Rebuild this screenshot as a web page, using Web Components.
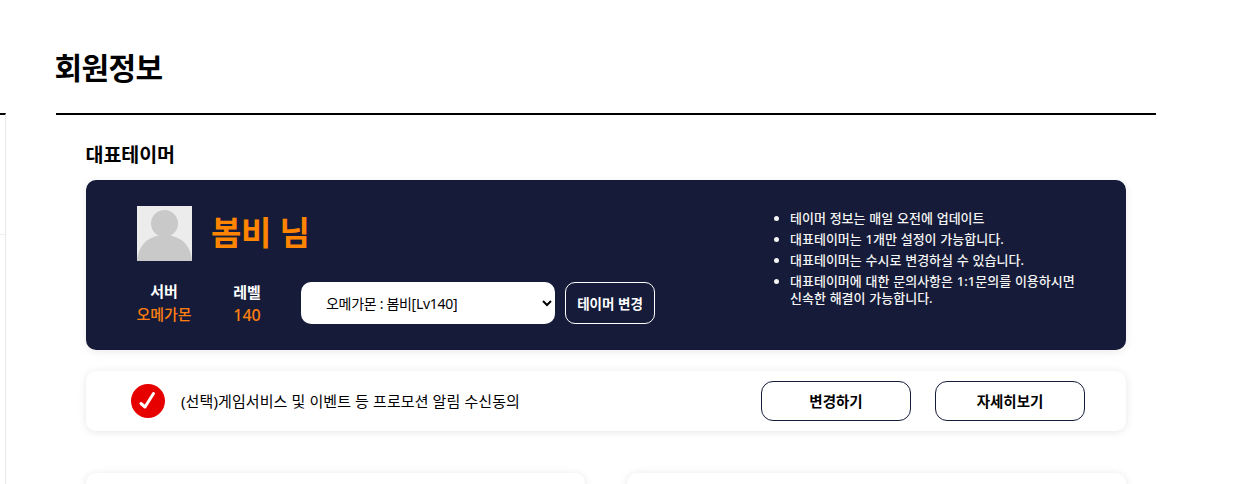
<!DOCTYPE html>
<html lang="ko">
<head>
<meta charset="utf-8">
<title>회원정보</title>
<style>
  html, body { margin: 0; padding: 0; background: #fff; overflow: hidden; }
  body { font-family: "Noto Sans", "Noto Sans CJK KR", sans-serif; color: #000; }
</style>
</head>
<body>
<member-page>
  <tier-card></tier-card>
  <consent-bar></consent-bar>
  <div slot="cards" style="display:contents">
    <blank-card></blank-card>
    <blank-card></blank-card>
  </div>
</member-page>

<script>
const FONT = `"Noto Sans", "Noto Sans CJK KR", sans-serif`;

class MemberPage extends HTMLElement {
  constructor() {
    super();
    this.attachShadow({ mode: "open" }).innerHTML = `
      <style>
        :host { display: flex; width: 1253px; height: 484px; overflow: hidden; font-family: ${FONT}; }
        .side { flex: 0 0 56px; display: flex; flex-direction: column; padding-top: 113px; box-sizing: border-box; }
        .side-box { width: 6px; height: 122px; box-sizing: border-box; border-top: 2px solid #000; border-right: 1px solid #e8e8e8; border-bottom: 1px solid #eee; }
        .side-rest { width: 6px; flex: 1; box-sizing: border-box; border-right: 1px solid #e8e8e8; }
        main { flex: 0 0 1100px; }
        h1 { margin: 0 0 0 -1.5px; height: 113px; box-sizing: border-box; padding-top: 46px; font-size: 30px; line-height: 44px; font-weight: 700; letter-spacing: -0.6px; }
        .body { border-top: 2px solid #000; padding: 27px 30px 0; }
        h2 { margin: 0 0 12px -0.4px; font-size: 19.5px; line-height: 26px; font-weight: 700; letter-spacing: -0.1px; }
        .stack { display: flex; flex-direction: column; gap: 21px; }
        .cards { display: flex; gap: 42px; margin-top: 42px; }
      </style>
      <div class="side"><div class="side-box"></div><div class="side-rest"></div></div>
      <main>
        <h1>회원정보</h1>
        <div class="body">
          <h2>대표테이머</h2>
          <div class="stack"><slot></slot></div>
          <div class="cards"><slot name="cards"></slot></div>
        </div>
      </main>`;
  }
}

class TierCard extends HTMLElement {
  constructor() {
    super();
    this.attachShadow({ mode: "open" }).innerHTML = `
      <style>
        :host { display: flex; justify-content: space-between; height: 170px; box-sizing: border-box; background: #151b38; border-radius: 10px; color: #fff; box-shadow: 0 2px 8px rgba(0,0,0,.08); padding: 26px 0 0 51px; }
        .who { display: flex; align-items: center; gap: 19px; }
        .avatar { width: 55px; height: 55px; display: block; }
        .name { font-size: 33px; line-height: 50px; font-weight: 700; color: #ff8400; margin-top: -1px; letter-spacing: -0.3px; }
        .row { display: flex; align-items: center; margin-top: 19px; margin-left: -14px; }
        .stat { width: 82px; text-align: center; font-size: 15px; line-height: 23px; }
        .stat b { display: block; font-weight: 700; }
        .stat span { display: block; color: #ff7f10; font-weight: 500; }
        .stat + .stat { width: 84px; }
        .stat + .stat span { font-size: 16px; line-height: 22px; }
        select { width: 254px; height: 42px; margin-left: 12px; border: 0; border-radius: 10px; background: #fff; color: #000; font: 400 14px ${FONT}; letter-spacing: -0.3px; padding-left: 21px; }
        .btn { width: 90px; height: 42px; margin-left: 10px; box-sizing: border-box; border: 1px solid #fff; border-radius: 10px; background: transparent; color: #fff; font: 700 13.5px ${FONT}; padding: 0; }
        ul { margin: 0; padding: 4px 0 0 0; width: 336px; list-style: disc; font-size: 13px; line-height: 17px; font-weight: 500; color: #f4f4f4; word-spacing: 0.4px; }
        li { margin: 0 0 4px 0; }
      </style>
      <div>
        <div class="who">
          <svg class="avatar" viewBox="0 0 55 55" aria-hidden="true">
            <rect width="55" height="55" fill="#ececec"/>
            <circle cx="27.5" cy="17.5" r="13.5" fill="#c9c9c9"/>
            <path d="M0 55 C1 39 12 29 27.5 29 C43 29 54 39 55 55 Z" fill="#c9c9c9"/>
          </svg>
          <div class="name">봄비 님</div>
        </div>
        <div class="row">
          <div class="stat"><b>서버</b><span>오메가몬</span></div>
          <div class="stat"><b>레벨</b><span>140</span></div>
          <select><option>오메가몬 : 봄비[Lv140]</option></select>
          <button class="btn">테이머 변경</button>
        </div>
      </div>
      <ul>
        <li>테이머 정보는 매일 오전에 업데이트</li>
        <li>대표테이머는 1개만 설정이 가능합니다.</li>
        <li>대표테이머는 수시로 변경하실 수 있습니다.</li>
        <li>대표테이머에 대한 문의사항은 1:1문의를 이용하시면<br>신속한 해결이 가능합니다.</li>
      </ul>`;
  }
}

class ConsentBar extends HTMLElement {
  constructor() {
    super();
    this.attachShadow({ mode: "open" }).innerHTML = `
      <style>
        :host { display: flex; align-items: center; height: 60px; box-sizing: border-box; background: #fff; border-radius: 10px; box-shadow: 0 1px 8px rgba(0,0,0,.1); padding: 0 41px 0 45px; }
        svg { width: 34px; height: 34px; flex: none; }
        p { margin: 0 0 0 16px; flex: 1; font-size: 15px; line-height: 22px; color: #000; letter-spacing: 0.1px; }
        .btn { width: 150px; height: 40px; box-sizing: border-box; border: 1px solid #151b38; border-radius: 12px; background: #fff; color: #000; font: 700 14.5px ${FONT}; padding: 0 0 2px; }
        .btn + .btn { margin-left: 24px; }
      </style>
      <svg viewBox="0 0 34 34" aria-hidden="true">
        <circle cx="17" cy="17" r="17" fill="#e60000"/>
        <path d="M10 19.5 L14 23 L22.5 9.5" fill="none" stroke="#fff" stroke-width="3" stroke-linecap="round" stroke-linejoin="round"/>
      </svg>
      <p>(선택)게임서비스 및 이벤트 등 프로모션 알림 수신동의</p>
      <button class="btn">변경하기</button>
      <button class="btn">자세히보기</button>`;
  }
}

class BlankCard extends HTMLElement {
  constructor() {
    super();
    this.attachShadow({ mode: "open" }).innerHTML = `
      <style>
        :host { display: block; width: 499px; height: 120px; background: #fff; border-radius: 10px; box-shadow: 0 1px 8px rgba(0,0,0,.1); }
      </style>`;
  }
}

customElements.define("member-page", MemberPage);
customElements.define("tier-card", TierCard);
customElements.define("consent-bar", ConsentBar);
customElements.define("blank-card", BlankCard);
</script>
</body>
</html>
